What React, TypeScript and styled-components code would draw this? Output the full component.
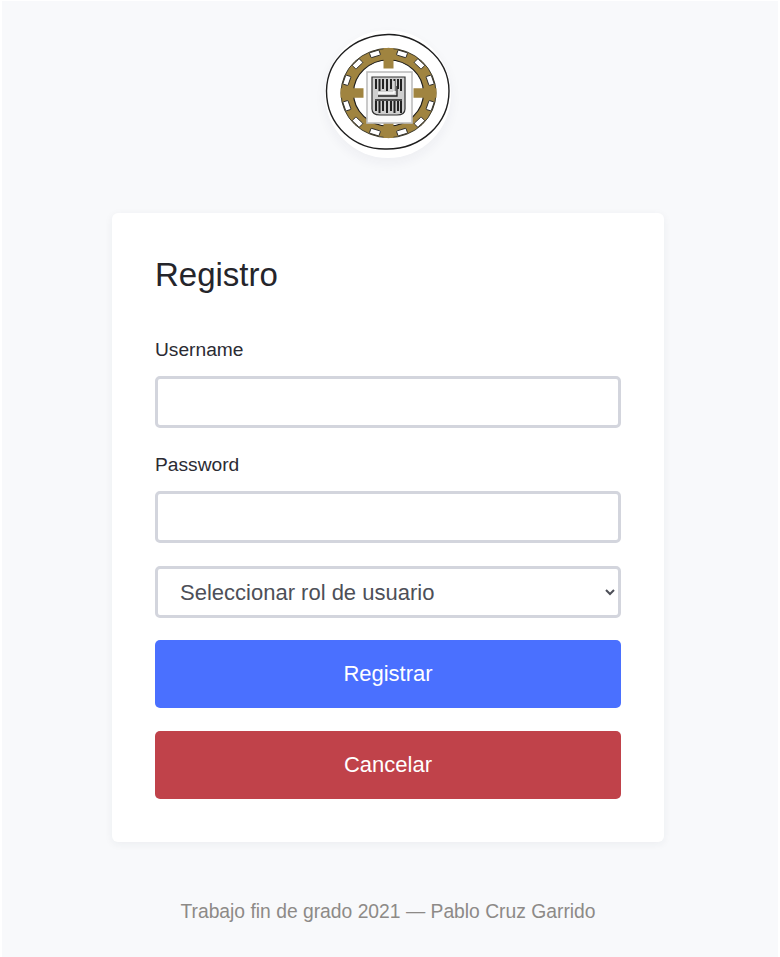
import * as React from "react";
import styled, { createGlobalStyle } from "styled-components";

const Global = createGlobalStyle`
  html, body {
    margin: 0;
    padding: 0;
    background: #fff;
  }
  body {
    font-family: "Liberation Sans", Arial, sans-serif;
    color: #2b2b33;
  }
`;

const Page = styled.div`
  box-sizing: border-box;
  width: 776px;
  height: 956px;
  margin: 1px 0 0 2px;
  padding: 29px 4px 0 0;
  background: #f8f9fb;
  display: flex;
  flex-direction: column;
  align-items: center;
  overflow: hidden;
`;

const LogoWrap = styled.div`
  width: 126px;
  height: 128px;
  border-radius: 50%;
  margin-bottom: 55px;
  background: #fff;
  box-shadow: 0 5px 12px rgba(40, 45, 70, 0.05);
`;

const LogoSvg = styled.svg`
  display: block;
  filter: blur(0.5px);
`;

const Card = styled.div`
  box-sizing: border-box;
  width: 552px;
  padding: 43px;
  background: #fff;
  border-radius: 6px;
  box-shadow: 0 2px 8px rgba(40, 45, 70, 0.06);
  display: flex;
  flex-direction: column;
`;

const Title = styled.h1`
  margin: 0 0 42px;
  font-size: 33px;
  line-height: 38px;
  font-weight: 400;
  color: #25252b;
`;

const Label = styled.label`
  display: block;
  margin: 3px 0 15px;
  font-size: 19.2px;
  line-height: 22px;
  color: #2b2b33;
`;

const Field = styled.div`
  margin-bottom: 23px;
`;

const TextInput = styled.input`
  display: block;
  box-sizing: border-box;
  width: 100%;
  height: 52px;
  border: 3px solid #d3d5dd;
  border-radius: 5px;
  background: #fff;
  outline: none;
`;

const RoleSelect = styled.select`
  display: block;
  box-sizing: border-box;
  width: 100%;
  height: 52px;
  padding: 0 0 0 18px;
  margin-bottom: 22px;
  border: 3px solid #d3d5dd;
  border-radius: 5px;
  background: #fff;
  color: #4d4f58;
  font-family: inherit;
  font-size: 22px;
  outline: none;
`;

const Button = styled.button<{ $tone: "primary" | "danger" }>`
  display: block;
  width: 100%;
  height: 68px;
  border: 0;
  border-radius: 5px;
  background: ${(p) => (p.$tone === "primary" ? "#4a70ff" : "#c0424a")};
  color: #fff;
  font-family: inherit;
  font-size: 22px;
  & + & {
    margin-top: 23px;
  }
`;

const Footer = styled.footer`
  margin-top: 59px;
  font-size: 19.3px;
  line-height: 22px;
  color: #8d8a87;
`;

const GOLD = "#a08440";
const WINDOW_ANGLES = [18, 45, 72, 108, 135, 162, 198, 225, 252, 288, 315, 342];
const HATCH = [51, 54.5, 58, 62, 66, 69.5, 73, 76];

const Logo = () => (
  <LogoSvg width="126" height="128" viewBox="0 0 126 128">
    <path
      d="M63 4.5C90 3.5 124 26 124 61C124 94 96 119 62 119C30 120 1.5 96 1.5 61C2 28 30 5.5 63 4.5Z"
      fill="#fff"
      stroke="#1e1e1e"
      strokeWidth={1.4}
    />
    <g transform="translate(63.5 63) scale(1 0.94)">
      <circle r={47.5} fill={GOLD} stroke="#2a2a20" strokeWidth={0.9} />
      {WINDOW_ANGLES.map((a) => (
        <rect
          key={a}
          x={-5}
          y={-46.5}
          width={10}
          height={5.5}
          rx={0.8}
          fill="#fff"
          stroke="#2b2b2b"
          strokeWidth={0.9}
          transform={`rotate(${a})`}
        />
      ))}
      <circle r={35} fill="#fff" stroke="#1c1c1c" strokeWidth={1.1} />
      <path d="M-5 -48H5V-26H-5Z M-5 26H5V48H-5Z M-48 -5H-25V5H-48Z M25 -5H48V5H25Z" fill={GOLD} />
    </g>
    <rect x={42} y={42} width={45} height={51} fill="#fafafa" stroke="#bdbdbd" strokeWidth={1.6} />
    <path d="M47 47H80V79Q80 85 72 85H55Q47 85 47 79Z" fill="#cfcfcf" stroke="#333" strokeWidth={1.2} />
    {HATCH.map((x, i) => (
      <path
        key={x}
        d={`M${x} 49V${i % 2 ? 61 : 59}M${x} 71V${i % 2 ? 83 : 81}`}
        stroke="#222"
        strokeWidth={2}
      />
    ))}
    <path d="M53 66H72V56M50 70H77" stroke="#222" strokeWidth={1.3} fill="none" />
    <path d="M53 63H69V51" stroke="#fff" strokeWidth={1.4} fill="none" />
  </LogoSvg>
);

export default function App() {
  return (
    <Page>
      <Global />
      <LogoWrap>
        <Logo />
      </LogoWrap>
      <Card>
        <Title>Registro</Title>
        <Field>
          <Label htmlFor="username">Username</Label>
          <TextInput id="username" type="text" />
        </Field>
        <Field>
          <Label htmlFor="password">Password</Label>
          <TextInput id="password" type="password" />
        </Field>
        <RoleSelect defaultValue="">
          <option value="">Seleccionar rol de usuario</option>
        </RoleSelect>
        <Button $tone="primary">Registrar</Button>
        <Button $tone="danger">Cancelar</Button>
      </Card>
      <Footer>Trabajo fin de grado 2021 — Pablo Cruz Garrido</Footer>
    </Page>
  );
}
